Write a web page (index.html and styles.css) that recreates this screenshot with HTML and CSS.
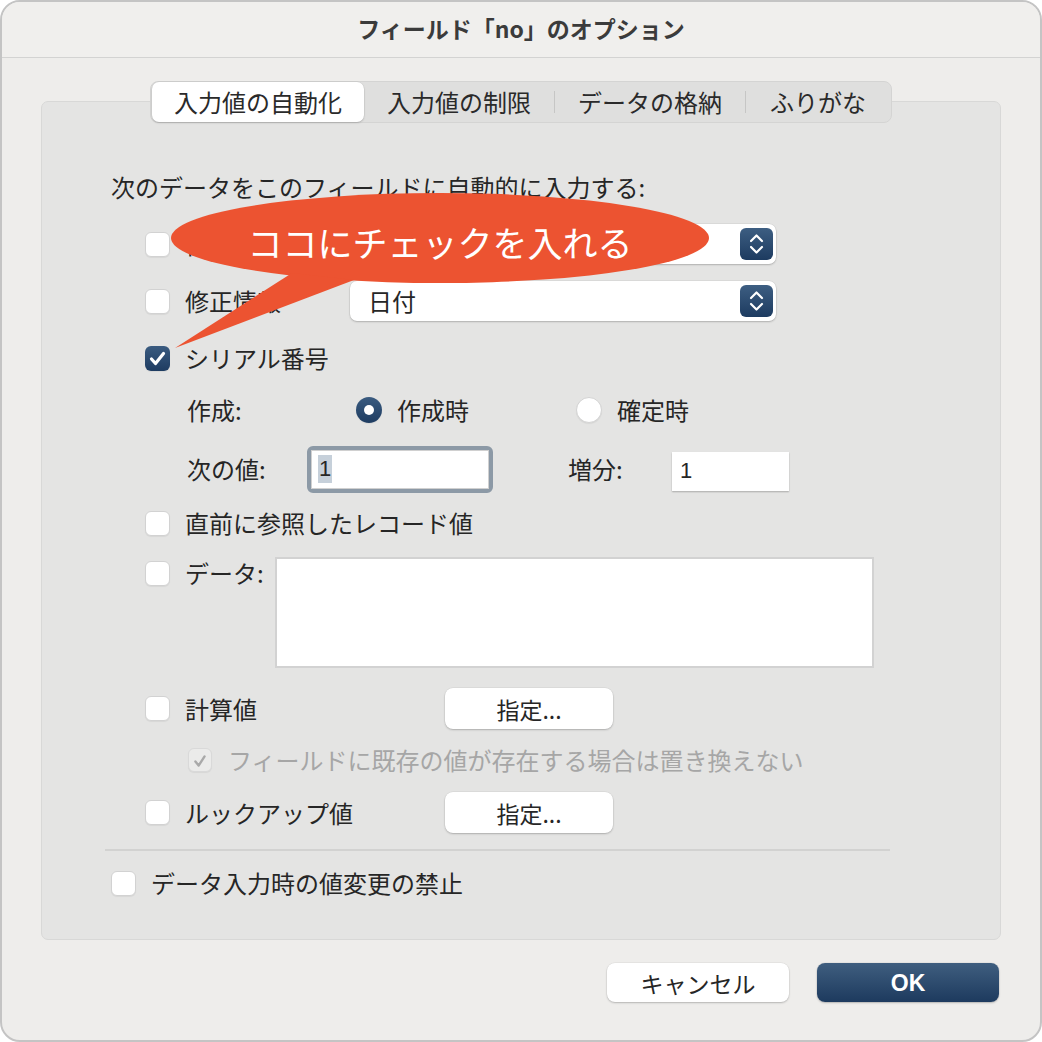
FILE: index.html
```html
<!DOCTYPE html>
<html lang="ja">
<head>
<meta charset="utf-8">
<title>フィールド「no」のオプション</title>
<link rel="stylesheet" href="styles.css">
</head>
<body>
<div class="window">
  <div class="titlebar">フィールド「no」のオプション</div>
  <div class="box">
    <div class="tabs">
      <div class="tab t1 sel">入力値の自動化</div>
      <div class="tab t2">入力値の制限</div>
      <div class="tsep"></div>
      <div class="tab t3">データの格納</div>
      <div class="tsep"></div>
      <div class="tab t4">ふりがな</div>
    </div>

    <div class="intro">次のデータをこのフィールドに自動的に入力する:</div>

    <div class="row r1">
      <span class="cb"></span><span class="lbl lbl-pop">作成情報</span>
      <div class="popup"><span class="ptext"></span>
        <span class="stepper"><svg viewBox="0 0 33 32" width="33" height="32"><path d="M11 13 L16.5 7.5 L22 13 M11 19 L16.5 24.5 L22 19" fill="none" stroke="#fff" stroke-width="2.2" stroke-linecap="round" stroke-linejoin="round"/></svg></span>
      </div>
    </div>

    <div class="row r2">
      <span class="cb"></span><span class="lbl lbl-pop">修正情報</span>
      <div class="popup"><span class="ptext">日付</span>
        <span class="stepper"><svg viewBox="0 0 33 32" width="33" height="32"><path d="M11 13 L16.5 7.5 L22 13 M11 19 L16.5 24.5 L22 19" fill="none" stroke="#fff" stroke-width="2.2" stroke-linecap="round" stroke-linejoin="round"/></svg></span>
      </div>
    </div>

    <div class="row r3">
      <span class="cb on"><svg viewBox="0 0 25 25" width="25" height="25"><path d="M6.5 13 L10.5 17.5 L18.5 7.5" fill="none" stroke="#fff" stroke-width="3.2" stroke-linecap="round" stroke-linejoin="round"/></svg></span><span class="lbl">シリアル番号</span>
    </div>

    <div class="row r4 sub">
      <span class="sublbl w-create">作成:</span>
      <div class="radiogrp">
        <span class="radio on"></span><span class="lbl">作成時</span>
      </div>
      <div class="radiogrp">
        <span class="radio"></span><span class="lbl">確定時</span>
      </div>
    </div>

    <div class="row r5 sub">
      <span class="sublbl w-next">次の値:</span>
      <div class="focusring"><div class="field"><span class="selnum">1</span></div></div>
      <span class="sublbl w-inc">増分:</span>
      <div class="field small"><span class="num">1</span></div>
    </div>

    <div class="row r6">
      <span class="cb"></span><span class="lbl">直前に参照したレコード値</span>
    </div>

    <div class="row r7">
      <span class="cb"></span><span class="lbl lbl-data">データ:</span>
      <div class="textarea"></div>
    </div>

    <div class="row r8">
      <span class="cb"></span><span class="lbl lbl-btn">計算値</span>
      <div class="btn spec">指定...</div>
    </div>

    <div class="row r9">
      <span class="cb dis"><svg viewBox="0 0 24 24" width="24" height="24"><path d="M7 12.5 L10.5 17 L17 7" fill="none" stroke="#a9a9a9" stroke-width="2.6" stroke-linecap="round" stroke-linejoin="round"/></svg></span><span class="lbl dimtext">フィールドに既存の値が存在する場合は置き換えない</span>
    </div>

    <div class="row r10">
      <span class="cb"></span><span class="lbl lbl-btn">ルックアップ値</span>
      <div class="btn spec">指定...</div>
    </div>

    <div class="sep"></div>

    <div class="row r11">
      <span class="cb"></span><span class="lbl">データ入力時の値変更の禁止</span>
    </div>
  </div>

  <div class="footer">
    <div class="btn cancel">キャンセル</div>
    <div class="btn ok">OK</div>
  </div>

  <div class="balloon">
    <svg class="bshape" viewBox="0 0 560 170" width="560" height="170">
      <ellipse cx="280" cy="53" rx="269" ry="45" fill="#ec5331"/>
      <polygon points="132,88 194,95 15,163" fill="#ec5331"/>
    </svg>
    <div class="btext">ココにチェックを入れる</div>
  </div>
</div>
</body>
</html>
```

FILE: styles.css
```css
* { box-sizing: border-box; }
html, body { margin: 0; padding: 0; background: #ffffff; }
body {
  font-family: "Noto Sans CJK JP", "Noto Sans", sans-serif;
  color: #262626;
  font-size: 24px;
  line-height: 30px;
}
.window {
  position: relative;
  width: 1042px;
  height: 1042px;
  border: 2px solid #c4c4c4;
  border-radius: 20px;
  background: #eeedeb;
  overflow: hidden;
}
.titlebar {
  height: 56px;
  border-bottom: 1px solid #d3d3d2;
  background: #f0efed;
  display: flex;
  align-items: center;
  justify-content: center;
  font-size: 23px;
  font-weight: 700;
  color: #3b3b3b;
  padding-bottom: 4px;
}
.box {
  margin: 43px 0 0 39px;
  width: 960px;
  height: 839px;
  border: 1px solid #d8d8d7;
  border-radius: 7px;
  background: #e4e4e3;
  display: flex;
  flex-direction: column;
}
.tabs {
  margin: -21px auto 0;
  height: 42px;
  width: 742px;
  background: #dfdfde;
  border: 1px solid #d4d4d3;
  border-radius: 8px;
  display: flex;
  align-items: center;
  padding: 0 1px;
}
.tab {
  height: 40px;
  display: flex;
  align-items: center;
  justify-content: center;
  font-size: 24px;
  color: #2a2a2a;
}
.tab.sel {
  background: #ffffff;
  border-radius: 7px;
  box-shadow: 0 1px 2px rgba(0,0,0,0.18), 0 0 0 0.5px rgba(0,0,0,0.06);
}
.t1 { width: 212px; }
.t2 { width: 190px; }
.t3 { width: 190px; }
.t4 { width: 144px; }
.tsep { width: 1px; height: 22px; background: #c6c6c5; }

.intro { margin: 49px 0 0 69px; height: 30px; }

.row { display: flex; align-items: center; height: 40px; margin-left: 103px; }
.row.sub { margin-left: 145px; }
.r1 { margin-top: 22px; }
.r2 { margin-top: 17px; }
.r3 { margin-top: 17px; }
.r4 { margin-top: 12px; }
.r5 { margin-top: 15px; height: 48px; }
.r6 { margin-top: 10px; }
.r7 { margin-top: 14px; height: 111px; align-items: flex-start; }
.r8 { margin-top: 20px; height: 41px; }
.r9 { margin-top: 11px; margin-left: 146px; }
.r10 { margin-top: 12px; height: 41px; }
.r11 { margin-top: 12px; margin-left: 69px; }

.cb {
  width: 25px; height: 25px;
  flex: none;
  border-radius: 6px;
  background: #ffffff;
  border: 1px solid #d2d2d2;
  box-shadow: 0 1px 1px rgba(0,0,0,0.06);
  margin-right: 15px;
  display: flex;
}
.cb.on {
  border: none;
  background: linear-gradient(#3a5b80, #1e3c61);
}
.cb.dis {
  width: 24px; height: 24px;
  background: #ebebea;
  border: 1px solid #d9d9d9;
  margin-right: 16px;
}
.r7 .cb { margin-top: 4px; }
.r7 .lbl { margin-top: 1px; }

.lbl { white-space: nowrap; }
.lbl-pop { width: 165px; }
.lbl-data { width: 90px; }
.lbl-btn { width: 260px; }
.dimtext { color: #a6a6a6; }

.popup {
  width: 426px; height: 40px;
  background: #ffffff;
  border-radius: 7px;
  box-shadow: 0 1px 2px rgba(0,0,0,0.2), 0 0 0 0.5px rgba(0,0,0,0.08);
  display: flex;
  align-items: center;
  justify-content: space-between;
  padding: 0 3px 0 18px;
}
.stepper {
  width: 33px; height: 32px;
  border-radius: 6px;
  background: linear-gradient(#3d5e82, #1d3b60);
  display: flex;
}

.sublbl { white-space: nowrap; }
.w-create { width: 169px; }
.w-next { width: 120px; }
.w-inc { width: 104px; margin-left: 75px; }

.radiogrp { display: flex; align-items: center; width: 220px; }
.radio {
  width: 26px; height: 26px; flex: none;
  border-radius: 50%;
  background: #ffffff;
  border: 1px solid #d3d3d3;
  box-shadow: 0 1px 1px rgba(0,0,0,0.06);
  margin-right: 15px;
  position: relative;
}
.radio.on {
  border: none;
  background: linear-gradient(#3a5b80, #1e3c61);
}
.radio.on::after {
  content: "";
  position: absolute;
  left: 8px; top: 8px;
  width: 10px; height: 10px;
  border-radius: 50%;
  background: #ffffff;
}

.focusring {
  width: 186px; height: 47px;
  border: 4px solid #8c99a6;
  border-radius: 6px;
  display: flex;
}
.field {
  flex: 1;
  background: #ffffff;
  border: 1px solid #d0d0d0;
  display: flex;
  align-items: center;
  padding-left: 6px;
  font-family: "Liberation Sans", "Noto Sans", sans-serif;
  font-size: 22px;
}
.field.small {
  flex: none;
  width: 117px; height: 39px;
  border: none;
  box-shadow: 0 1px 1.5px rgba(0,0,0,0.25);
  padding-left: 8px;
  margin-top: 4px;
}
.selnum { background: #c6d0da; padding: 0 1px; line-height: 28px; }

.textarea {
  width: 599px; height: 111px;
  background: #ffffff;
  border: 2px solid #d2d2d2;
}

.btn {
  display: flex; align-items: center; justify-content: center;
  background: #ffffff;
  border-radius: 8px;
  box-shadow: 0 1px 2px rgba(0,0,0,0.22), 0 0 0 0.5px rgba(0,0,0,0.06);
  font-size: 23px;
  color: #262626;
}
.spec { width: 168px; height: 41px; }

.sep { margin: 16px 0 0 63px; width: 785px; height: 2px; background: #d2d2d1; }

.footer {
  display: flex;
  justify-content: flex-end;
  gap: 28px;
  margin: 23px 41px 0 0;
}
.cancel { width: 182px; height: 39px; }
.ok {
  width: 182px; height: 39px;
  background: linear-gradient(#3f5e7f, #1d3a5e);
  color: #ffffff;
  font-family: "Liberation Sans", "Noto Sans", sans-serif;
  font-weight: 700;
  font-size: 23px;
}

.balloon {
  position: absolute;
  left: 158px; top: 183px;
  width: 560px; height: 170px;
}
.bshape { position: absolute; left: 0; top: 0; }
.btext {
  position: absolute;
  left: 0; top: 8px;
  width: 560px; height: 98px;
  display: flex; align-items: center; justify-content: center;
  color: #ffffff;
  font-size: 35px;
  line-height: 40px;
}
```
